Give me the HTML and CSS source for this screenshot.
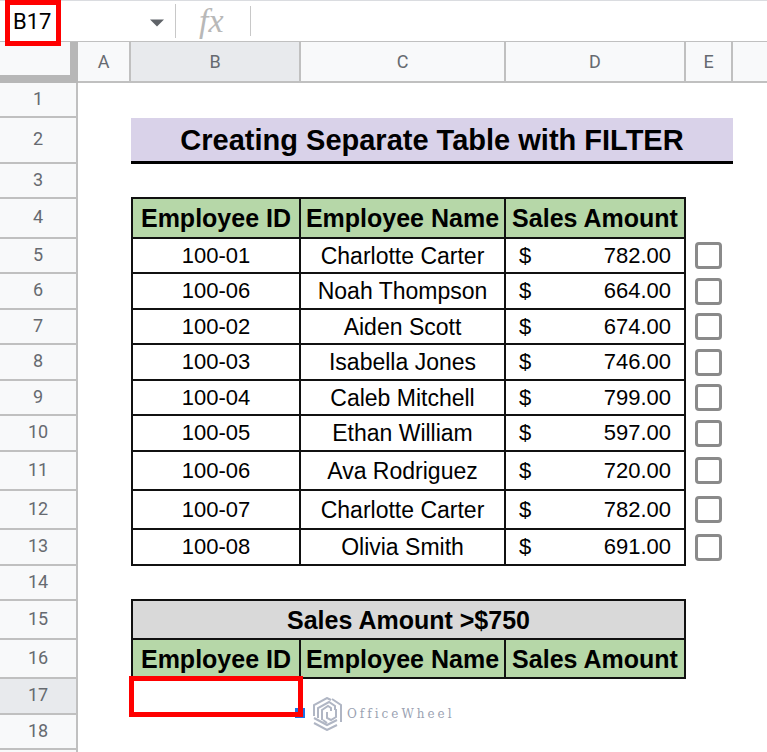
FILE: index.html
```html
<!DOCTYPE html>
<html lang="en">
<head>
<meta charset="utf-8">
<title>Creating Separate Table with FILTER</title>
<link rel="stylesheet" href="styles.css">
</head>
<body>
<header class="bar">
  <div class="name-box">
    <input class="name-input" type="text" value="B17" aria-label="Name box">
    <span class="mark mark-name"></span>
    <button class="drop" type="button" aria-label="Named ranges">
      <svg width="14" height="8" viewBox="0 0 14 8"><path d="M0 0.5H14L7 7.5Z" fill="#5f6368"/></svg>
    </button>
  </div>
  <label class="fx" for="formula">fx</label>
  <input class="formula" id="formula" type="text">
</header>
<main>
<table class="sheet">
  <colgroup><col class="c-num"><col class="c-a"><col class="c-b"><col class="c-c"><col class="c-d"><col class="c-e"><col></colgroup>
  <thead>
    <tr><td class="corner"></td><th>A</th><th class="on">B</th><th>C</th><th>D</th><th>E</th><th class="last"></th></tr>
  </thead>
  <tbody>
    <tr class="h35"><th>1</th><td colspan="6"></td></tr>
    <tr class="h46"><th>2</th><td></td><td class="title" colspan="4">Creating Separate Table with FILTER</td><td></td></tr>
    <tr class="h35"><th>3</th><td></td><td class="under" colspan="3"></td><td colspan="2"></td></tr>
    <tr class="h40"><th>4</th><td></td><td class="box first head">Employee ID</td><td class="box head">Employee Name</td><td class="box head">Sales Amount</td><td colspan="2"></td></tr>
    <tr class="h35"><th>5</th><td></td><td class="box first id">100-01</td><td class="box">Charlotte Carter</td><td class="box"><div class="money"><span>$</span><span>782.00</span></div></td><td class="pick"><input type="checkbox" aria-label="Select row 5"></td><td></td></tr>
    <tr class="h36"><th>6</th><td></td><td class="box first id">100-06</td><td class="box">Noah Thompson</td><td class="box"><div class="money"><span>$</span><span>664.00</span></div></td><td class="pick"><input type="checkbox" aria-label="Select row 6"></td><td></td></tr>
    <tr class="h35"><th>7</th><td></td><td class="box first id">100-02</td><td class="box">Aiden Scott</td><td class="box"><div class="money"><span>$</span><span>674.00</span></div></td><td class="pick"><input type="checkbox" aria-label="Select row 7"></td><td></td></tr>
    <tr class="h36"><th>8</th><td></td><td class="box first id">100-03</td><td class="box">Isabella Jones</td><td class="box"><div class="money"><span>$</span><span>746.00</span></div></td><td class="pick"><input type="checkbox" aria-label="Select row 8"></td><td></td></tr>
    <tr class="h35"><th>9</th><td></td><td class="box first id">100-04</td><td class="box">Caleb Mitchell</td><td class="box"><div class="money"><span>$</span><span>799.00</span></div></td><td class="pick"><input type="checkbox" aria-label="Select row 9"></td><td></td></tr>
    <tr class="h36"><th>10</th><td></td><td class="box first id">100-05</td><td class="box">Ethan William</td><td class="box"><div class="money"><span>$</span><span>597.00</span></div></td><td class="pick"><input type="checkbox" aria-label="Select row 10"></td><td></td></tr>
    <tr class="h39"><th>11</th><td></td><td class="box first id">100-06</td><td class="box">Ava Rodriguez</td><td class="box"><div class="money"><span>$</span><span>720.00</span></div></td><td class="pick"><input type="checkbox" aria-label="Select row 11"></td><td></td></tr>
    <tr class="h39"><th>12</th><td></td><td class="box first id">100-07</td><td class="box">Charlotte Carter</td><td class="box"><div class="money"><span>$</span><span>782.00</span></div></td><td class="pick"><input type="checkbox" aria-label="Select row 12"></td><td></td></tr>
    <tr class="h36"><th>13</th><td></td><td class="box first id">100-08</td><td class="box">Olivia Smith</td><td class="box"><div class="money"><span>$</span><span>691.00</span></div></td><td class="pick"><input type="checkbox" aria-label="Select row 13"></td><td></td></tr>
    <tr class="h35"><th>14</th><td></td><td class="under" colspan="3"></td><td colspan="2"></td></tr>
    <tr class="h39"><th>15</th><td></td><td class="box first head gray" colspan="3">Sales Amount &gt;$750</td><td colspan="2"></td></tr>
    <tr class="h39"><th>16</th><td></td><td class="box first head">Employee ID</td><td class="box head">Employee Name</td><td class="box head">Sales Amount</td><td colspan="2"></td></tr>
    <tr class="h36"><th class="on">17</th><td></td>
      <td class="anchor"><span class="handle"></span><span class="mark mark-cell"></span></td>
      <td class="anchor">
        <div class="brand">
          <svg width="30" height="34" viewBox="0 0 30 34" fill="none" stroke="#b0b6c4" stroke-width="2">
            <path d="M1 19V8L14 1L18 3M5 21V11L16 5L22 9V13"/>
            <path d="M19 2L28 8V25M9 23V13L15 9L18 11V14M14 26L10 23M14 15V21L18 23L23 20V12"/>
            <path d="M1 21L14 28L24 23M1 26L14 33L24 28"/>
          </svg>
          <span>OfficeWheel</span>
        </div>
      </td>
      <td colspan="3"></td></tr>
    <tr class="h35"><th>18</th><td colspan="6"></td></tr>
    <tr class="h35"><th></th><td colspan="6"></td></tr>
  </tbody>
</table>
</main>
</body>
</html>
```
FILE: styles.css
```css
* { box-sizing: border-box; }

body {
  margin: 0;
  height: 100vh;
  overflow: hidden;
  background: #fff;
  color: #000;
  font-family: "Liberation Sans", Arial, sans-serif;
}

/* Formula bar */
.bar {
  display: flex;
  align-items: center;
  height: 42px;
  border-top: 1px solid #dadce0;
  border-bottom: 1px solid #c0c0c0;
}
.name-box {
  position: relative;
  display: flex;
  align-items: center;
  flex: none;
  width: 176px;
  height: 34px;
  padding: 0 11px 0 13px;
  border-right: 1px solid #c8c8c8;
}
.name-input {
  flex: 1;
  min-width: 0;
  padding: 0;
  border: 0;
  background: none;
  color: #000;
  font: 22px Roboto, sans-serif;
  outline: none;
}
.drop {
  display: flex;
  padding: 4px 0 0;
  border: 0;
  background: none;
}
.fx {
  flex: none;
  width: 74px;
  padding-left: 23px;
  color: #b8b8b8;
  font: italic 34px/38px "Liberation Serif", serif;
}
.formula {
  flex: 1;
  min-width: 0;
  height: 30px;
  border: 0;
  border-left: 1px solid #c8c8c8;
  background: none;
  font: 22px Roboto, sans-serif;
  outline: none;
}

/* Red callout frames */
.mark {
  position: absolute;
  border: 5px solid #f00;
  pointer-events: none;
}
.mark-name { left: 5px; top: -4px; width: 56px; height: 46px; }
.mark-cell { inset: -3px -2px -2px -2px; }

/* Grid */
.sheet {
  width: 100%;
  table-layout: fixed;
  border-collapse: separate;
  border-spacing: 0;
}
.c-num { width: 78px; }
.c-a { width: 53px; }
.c-b { width: 170px; }
.c-c { width: 205px; }
.c-d { width: 180px; }
.c-e { width: 47px; }

.sheet th {
  padding: 0 0 2px;
  border: solid #c0c0c0;
  border-width: 0 2px 2px 0;
  background: #f8f9fa;
  color: #666a70;
  font: 18px/20px Roboto, sans-serif;
}
.sheet thead th { height: 41px; padding: 0; }
.sheet th.on { background: #e8eaed; }
.sheet th.last { border-right: 0; }
.corner {
  border: solid #b7b7b7;
  border-width: 0 8px 8px 0;
  background: #f8f9fa;
}
.sheet td {
  padding: 0;
  text-align: center;
  white-space: nowrap;
  font-size: 23px;
  line-height: 26px;
}
.h35 { height: 35px; }
.h36 { height: 36px; }
.h39 { height: 39px; }
.h40 { height: 40px; }
.h46 { height: 46px; }

.sheet .title {
  border-bottom: 3px solid #000;
  background: #d9d2e9;
  font-size: 29px;
  font-weight: bold;
  line-height: 32px;
}
.under { border-bottom: 2px solid #111; }
.box {
  border: solid #111;
  border-width: 0 2px 2px 0;
}
.first { border-left-width: 2px; }
.sheet .head {
  background: #b6d7a8;
  font-size: 25px;
  font-weight: bold;
}
.sheet .gray { background: #d9d9d9; }
.sheet .id { font-size: 22px; }
.money {
  display: flex;
  justify-content: space-between;
  padding: 0 13px;
  font-size: 22px;
}
.sheet .pick { padding: 0 2px 2px 0; }
.pick input {
  display: block;
  appearance: none;
  width: 27px;
  height: 27px;
  margin: 0 auto;
  border: 3px solid #8a8a8a;
  border-radius: 4px;
  background: #fff;
}

/* Selected cell and overlay */
.anchor { position: relative; }
.handle {
  position: absolute;
  right: -4px;
  bottom: -3px;
  width: 10px;
  height: 10px;
  background: #1a73e8;
}
.brand {
  position: absolute;
  left: 12px;
  top: 18px;
  display: flex;
  align-items: center;
  gap: 4px;
  color: #9aa2b2;
  font: 12px/16px "DejaVu Serif", serif;
  letter-spacing: 3px;
}
```
